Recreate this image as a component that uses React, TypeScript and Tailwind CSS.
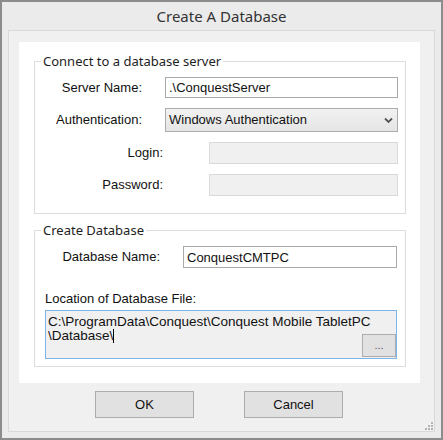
import React from "react"

const sans = "font-['Liberation_Sans',Arial,sans-serif]"
const ui = "font-['Noto_Sans','Open_Sans',sans-serif]"

function GroupBox({ title, className, children }: { title: string; className: string; children: React.ReactNode }) {
  return (
    <div className={`relative border border-[#dcdcdc] ml-[15px] w-[372px] ${className}`}>
      <span className={`absolute left-[6px] top-[-10px] bg-white px-[2px] text-[13px] leading-[18px] text-[#1e1e1e] ${ui}`}>
        {title}
      </span>
      {children}
    </div>
  )
}

function SizeGrip() {
  return (
    <svg width="8" height="8" viewBox="0 0 8 8" className="block">
      <rect x="6" y="0" width="2" height="2" fill="#b4b4b4" />
      <rect x="3" y="3" width="2" height="2" fill="#b4b4b4" />
      <rect x="6" y="3" width="2" height="2" fill="#b4b4b4" />
      <rect x="0" y="6" width="2" height="2" fill="#b4b4b4" />
      <rect x="3" y="6" width="2" height="2" fill="#b4b4b4" />
      <rect x="6" y="6" width="2" height="2" fill="#b4b4b4" />
    </svg>
  )
}

export default function App() {
  return (
    <div className={`w-[443px] h-[440px] border-2 border-[#8c8c8c] bg-[#ebebeb] flex flex-col ${sans}`}>
      {/* title bar */}
      <div className={`h-[28px] flex items-center justify-center text-[15px] text-[#333333] ${ui}`}>
        Create A Database
      </div>

      {/* client frame */}
      <div className="ml-[6px] w-[427px] h-[402px] border border-[#d9d9d9] bg-[#f0f0f0] flex flex-col">
        <div className="ml-[10px] mt-[11px] w-[401px] h-[341px] bg-white flex flex-col">
          <GroupBox title="Connect to a database server" className="mt-[19px] h-[153px]">
            <div className="flex flex-col gap-[10px] pt-[15px] text-[13px] text-[#111111]">
              <div className="flex items-center">
                <div className="w-[107px] text-right">Server Name:</div>
                <div className="ml-[23px] w-[233px] h-[21px] border border-[#a9a9a9] bg-white flex items-center pl-[3px] leading-none">
                  .\ConquestServer
                </div>
              </div>
              <div className="flex items-center">
                <div className="w-[107px] text-right">Authentication:</div>
                <div className="ml-[23px] w-[233px] h-[24px] border border-[#acacac] bg-gradient-to-b from-[#f2f2f2] to-[#e5e5e5] flex items-center justify-between pl-[3px] pr-[4px]">
                  <span>Windows Authentication</span>
                  <svg width="9" height="7" viewBox="0 0 9 7">
                    <path d="M1 1.5 L4.5 5 L8 1.5" stroke="#555555" strokeWidth="1.8" fill="none" />
                  </svg>
                </div>
              </div>
              <div className="flex items-center">
                <div className="w-[128px] text-right">Login:</div>
                <div className="ml-[46px] w-[189px] h-[22px] border border-[#dadada] bg-[#f0f0f0]" />
              </div>
              <div className="flex items-center">
                <div className="w-[128px] text-right">Password:</div>
                <div className="ml-[46px] w-[189px] h-[22px] border border-[#dadada] bg-[#f0f0f0]" />
              </div>
            </div>
          </GroupBox>

          <GroupBox title="Create Database" className="mt-[16px] h-[137px]">
            <div className="flex flex-col pt-[15px] text-[13px] text-[#111111]">
              <div className="flex items-center">
                <div className="w-[125px] text-right">Database Name:</div>
                <div className="ml-[23px] w-[214px] h-[22px] border border-[#a9a9a9] bg-white flex items-center pl-[3px] leading-none">
                  ConquestCMTPC
                </div>
              </div>
              <div className="ml-[10px] mt-[23px] leading-[15px]">Location of Database File:</div>
              <div className="relative ml-[10px] mt-[4px] w-[352px] h-[49px] border border-[#7eb4ea] bg-[#f0f0f0] pl-[2px] pt-[4px] text-[13.5px] leading-[14px]">
                <div>C:\ProgramData\Conquest\Conquest Mobile TabletPC</div>
                <div className="flex items-center">
                  \Database\<span className="inline-block w-px h-[14px] bg-black" />
                </div>
                <div className="absolute right-[0px] bottom-[1px] w-[34px] h-[23px] border border-[#adadad] bg-[#e1e1e1] flex items-center justify-center text-[11px] text-[#555555] pb-[2px]">
                  ...
                </div>
              </div>
            </div>
          </GroupBox>
        </div>

        {/* buttons */}
        <div className="flex pl-[86px] pt-[8px] gap-[50px] text-[13px] text-[#111111]">
          <div className="w-[99px] h-[27px] border border-[#adadad] bg-[#e1e1e1] flex items-center justify-center">OK</div>
          <div className="w-[99px] h-[27px] border border-[#adadad] bg-[#e1e1e1] flex items-center justify-center">Cancel</div>
        </div>
        <div className="flex justify-end pr-[1px] mt-[4px]">
          <SizeGrip />
        </div>
      </div>
    </div>
  )
}
